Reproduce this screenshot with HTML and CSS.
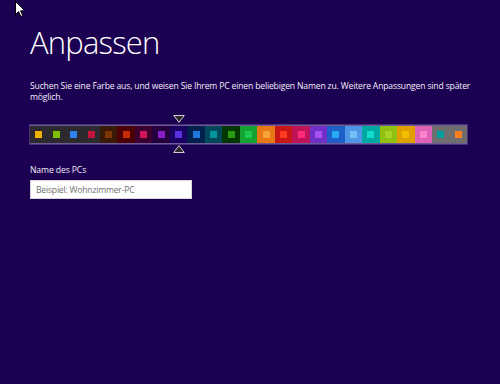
FILE: index.html
```html
<!DOCTYPE html>
<html lang="de">
<head>
<meta charset="utf-8">
<title>Anpassen</title>
<link rel="stylesheet" href="styles.css">
</head>
<body>
<svg class="cursor" width="12" height="18" viewBox="0 0 12 18"><path d="M0.5 0.5 L0.5 13.5 L3.5 10.5 L5.8 15.5 L7.8 14.6 L5.6 9.8 L9.8 9.8 Z" fill="#fff" stroke="#000" stroke-width="1"/></svg>
<main class="page">
  <h1 class="title">Anpassen</h1>
  <p class="intro">Suchen Sie eine Farbe aus, und weisen Sie Ihrem PC einen beliebigen Namen zu. Weitere Anpassungen sind später möglich.</p>
  <div class="picker">
    <div class="bar">
      <div class="tile" style="--bg:#2c2a2e;--fg:#f4b000"><span class="sq"></span></div>
      <div class="tile" style="--bg:#2c2a2e;--fg:#7cc000"><span class="sq"></span></div>
      <div class="tile" style="--bg:#2c2a2e;--fg:#2e7ff0"><span class="sq"></span></div>
      <div class="tile" style="--bg:#2c2a2e;--fg:#c0143c"><span class="sq"></span></div>
      <div class="tile" style="--bg:#3a1a04;--fg:#7a3800"><span class="sq"></span></div>
      <div class="tile" style="--bg:#4a0004;--fg:#c82c0a"><span class="sq"></span></div>
      <div class="tile" style="--bg:#3c0030;--fg:#d4145a"><span class="sq"></span></div>
      <div class="tile" style="--bg:#24003e;--fg:#8a1ec8"><span class="sq"></span></div>
      <div class="tile selected" style="--bg:#1a0062;--fg:#5a2ee0">
        <svg class="pointer pointer-top" width="12" height="8" viewBox="0 0 12 8"><path d="M0.7 0.5 L11.3 0.5 L6 7.3 Z" fill="#2a2a2e" stroke="#cfcbd4" stroke-width="1" stroke-linejoin="round"/></svg>
        <span class="sq"></span>
        <svg class="pointer pointer-bottom" width="12" height="8" viewBox="0 0 12 8"><path d="M0.7 7.5 L11.3 7.5 L6 0.7 Z" fill="#2a2a2e" stroke="#cfcbd4" stroke-width="1" stroke-linejoin="round"/></svg>
      </div>
      <div class="tile" style="--bg:#00204e;--fg:#1e78dc"><span class="sq"></span></div>
      <div class="tile" style="--bg:#00485a;--fg:#00949c"><span class="sq"></span></div>
      <div class="tile" style="--bg:#003800;--fg:#2a9a12"><span class="sq"></span></div>
      <div class="tile" style="--bg:#14a232;--fg:#1ec850"><span class="sq"></span></div>
      <div class="tile" style="--bg:#e87816;--fg:#f8a436"><span class="sq"></span></div>
      <div class="tile" style="--bg:#c81616;--fg:#ff3a1e"><span class="sq"></span></div>
      <div class="tile" style="--bg:#c0145a;--fg:#ff2a78"><span class="sq"></span></div>
      <div class="tile" style="--bg:#7030c8;--fg:#a852f2"><span class="sq"></span></div>
      <div class="tile" style="--bg:#1e5ec8;--fg:#28aaf2"><span class="sq"></span></div>
      <div class="tile" style="--bg:#5096e6;--fg:#70c2f8"><span class="sq"></span></div>
      <div class="tile" style="--bg:#00a8a2;--fg:#12dcca"><span class="sq"></span></div>
      <div class="tile" style="--bg:#90c012;--fg:#a8d224"><span class="sq"></span></div>
      <div class="tile" style="--bg:#e0a000;--fg:#f0c000"><span class="sq"></span></div>
      <div class="tile" style="--bg:#e062b8;--fg:#ff82cc"><span class="sq"></span></div>
      <div class="tile" style="--bg:#6e6e6e;--fg:#00a0a0"><span class="sq"></span></div>
      <div class="tile" style="--bg:#6e6e6e;--fg:#ff7f1e"><span class="sq"></span></div>
    </div>
  </div>
  <label class="label" for="pcname">Name des PCs</label>
  <input class="field" id="pcname" type="text" placeholder="Beispiel: Wohnzimmer-PC">
</main>
</body>
</html>
```
FILE: styles.css
```css
html, body {
  margin: 0;
  padding: 0;
}
body {
  width: 500px;
  height: 384px;
  background: #1c0052;
  color: #f2f0f8;
  font-family: "Open Sans", "Liberation Sans", sans-serif;
  overflow: hidden;
  position: relative;
}
.cursor {
  position: absolute;
  left: 15px;
  top: 1px;
}
.page {
  display: flex;
  flex-direction: column;
  align-items: flex-start;
  padding: 24px 30px 0 30px;
}
.title {
  margin: 0;
  font-size: 31px;
  font-weight: 300;
  line-height: 36px;
  color: #ffffff;
  letter-spacing: -0.8px;
}
.intro {
  margin: 21px 0 0 0;
  width: 445px;
  font-size: 8.6px;
  line-height: 11px;
  letter-spacing: -0.16px;
}
.picker {
  margin-top: 22px;
  width: 437px;
}
.bar {
  display: flex;
  height: 17px;
  border-top: 1px solid rgba(210, 200, 230, 0.45);
  border-bottom: 1px solid rgba(210, 200, 230, 0.45);
  outline: 1px solid rgba(210, 200, 230, 0.25);
}
.tile {
  flex: 1 1 0;
  background: var(--bg);
  display: flex;
  align-items: center;
  justify-content: center;
  position: relative;
}
.sq {
  width: 7px;
  height: 7px;
  background: var(--fg);
}
.pointer {
  position: absolute;
  left: 50%;
  margin-left: -6px;
}
.pointer-top {
  top: -11px;
}
.pointer-bottom {
  bottom: -10px;
}
.label {
  margin-top: 20px;
  font-size: 8.6px;
  line-height: 12px;
  letter-spacing: -0.1px;
}
.field {
  margin-top: 4px;
  width: 162px;
  height: 19px;
  box-sizing: border-box;
  border: 1px solid #d8d8d8;
  background: #ffffff;
  padding: 0 5px;
  font-family: "Open Sans", "Liberation Sans", sans-serif;
  font-size: 8.6px;
  letter-spacing: -0.2px;
  color: #333;
  outline: none;
}
.field::placeholder {
  color: #707070;
}
```
